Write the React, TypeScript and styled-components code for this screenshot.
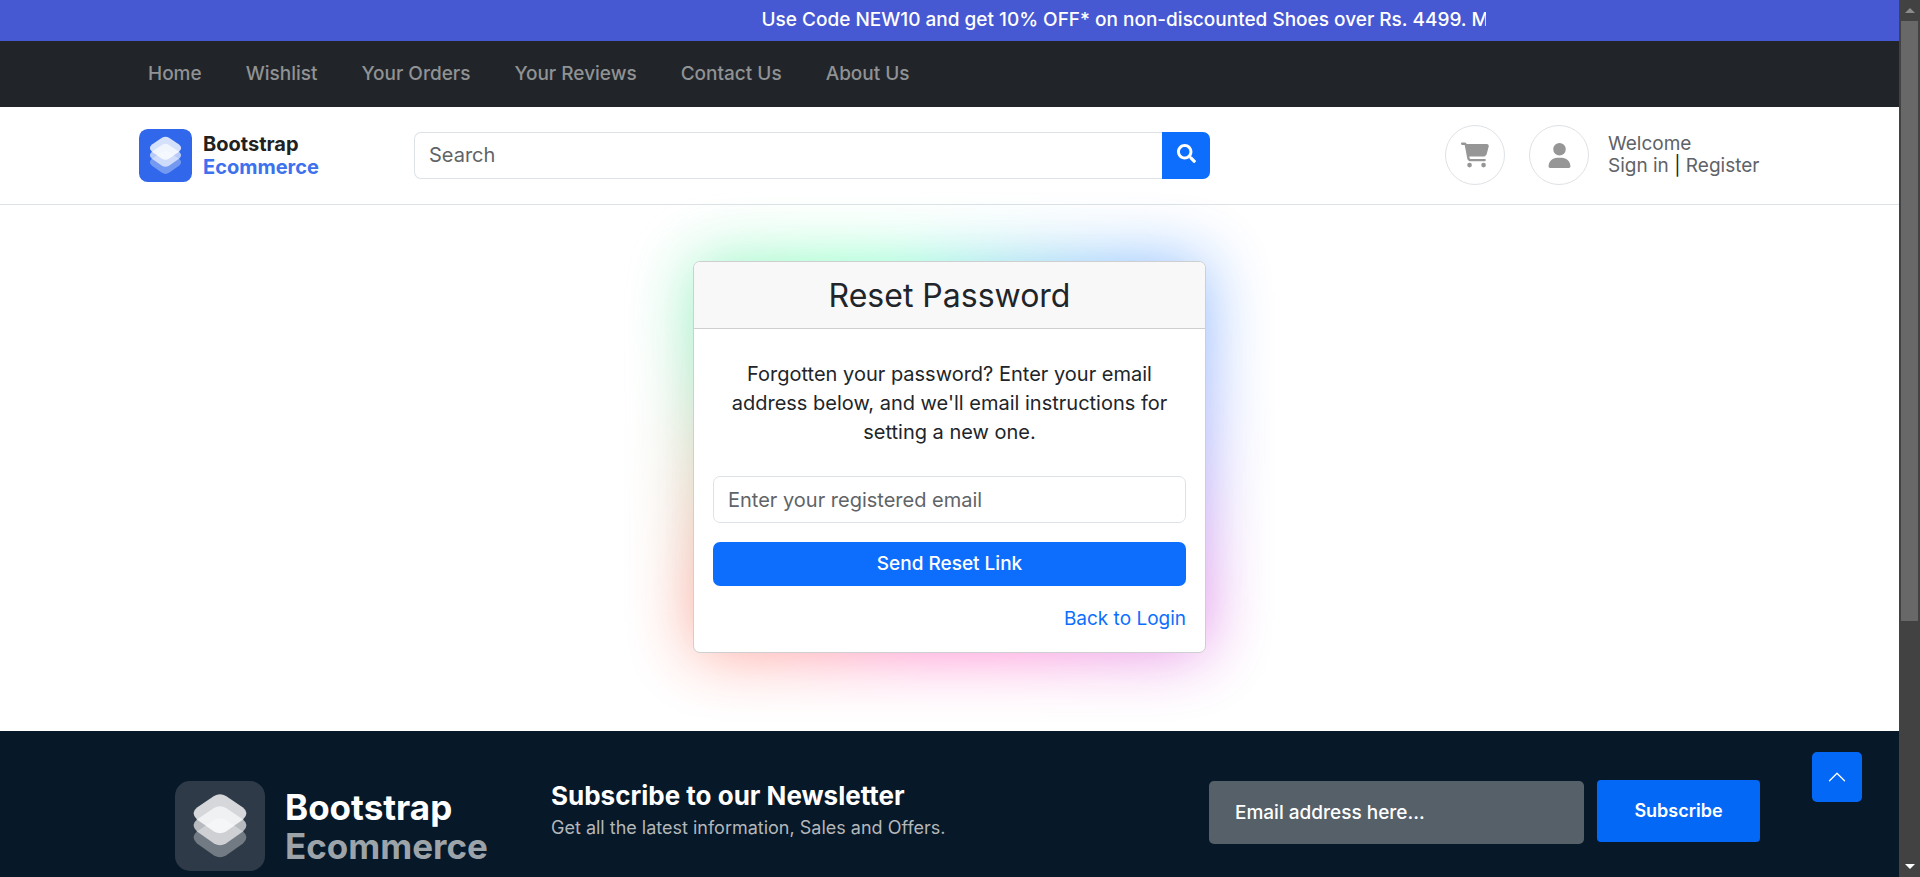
import React from "react";
import styled, { createGlobalStyle } from "styled-components";
import { FaCartShopping, FaUser } from "react-icons/fa6";
import { FaSearch } from "react-icons/fa";
import { BsChevronUp } from "react-icons/bs";

const GlobalStyle = createGlobalStyle`
  *, *::before, *::after { box-sizing: border-box; }
  body {
    margin: 0;
    background: #fff;
    color: #212529;
    font-family: Inter, "Open Sans", sans-serif;
    font-size: 19px;
    line-height: 28px;
  }
  h1, h2, p, ul { margin: 0; padding: 0; }
  button, input { font: inherit; }
  a { text-decoration: none; color: inherit; }
`;

const Shell = styled.div`
  display: grid;
  grid-template-columns: minmax(0, 1fr) 21px;
  height: 100vh;
  overflow: hidden;
`;

const Page = styled.div`
  position: relative;
  display: flex;
  flex-direction: column;
  min-width: 0;
  overflow: hidden;
`;

const Container = styled.div`
  display: flex;
  width: 100%;
  max-width: 1621px;
  margin: 0 auto;
`;

const PromoBar = styled.div`
  display: flex;
  justify-content: center;
  flex: none;
  height: 41px;
  background: #4758d3;
`;

const Marquee = styled.p`
  width: 1072px;
  padding-left: 348px;
  overflow: hidden;
  color: #fff;
  font-weight: 500;
  line-height: 40px;
  white-space: nowrap;
`;

const NavBar = styled.nav`
  flex: none;
  height: 66px;
  background: #212529;
`;

const NavList = styled.ul`
  display: flex;
  gap: 44px;
  padding-left: 9px;
  list-style: none;
`;

const NavLink = styled.a`
  display: block;
  color: #909294;
  font-weight: 500;
  line-height: 66px;
`;

const Header = styled.header`
  display: flex;
  flex: none;
  height: 98px;
  border-bottom: 1px solid #dee2e6;
`;

const HeaderRow = styled(Container)`
  align-items: center;
  padding-bottom: 1px;
`;

const Brand = styled.a<{ $large?: boolean }>`
  display: flex;
  align-items: center;
  flex: none;
  gap: ${(p) => (p.$large ? 20 : 11)}px;
  width: ${(p) => (p.$large ? 412 : 275)}px;
  padding-left: ${(p) => (p.$large ? 36 : 0)}px;
  color: ${(p) => (p.$large ? "#fff" : "#212121")};
  font-family: Inter, sans-serif;
  font-size: ${(p) => (p.$large ? 35 : 20)}px;
  font-weight: 700;
  line-height: ${(p) => (p.$large ? 39 : 23)}px;
`;

const BrandName = styled.span`
  padding-top: 2px;
`;

const BrandSecond = styled.span<{ $large?: boolean }>`
  display: block;
  color: ${(p) => (p.$large ? "#9ca3a9" : "#3d71ee")};
`;

const SearchForm = styled.form`
  display: flex;
  flex: 0 1 796px;
  height: 47px;
`;

const TextInput = styled.input`
  width: 100%;
  min-width: 0;
  height: 47px;
  padding: 0 14px;
  border: 1px solid #dee2e6;
  border-radius: 7px;
  background: #fff;
  font-size: 20px;
  outline: none;
  &::placeholder { color: #5f6468; opacity: 1; }
`;

const SearchInput = styled(TextInput)`
  flex: 1;
  border-right: 0;
  border-radius: 7px 0 0 7px;
`;

const SearchButton = styled.button`
  display: flex;
  align-items: center;
  justify-content: center;
  width: 48px;
  padding: 0 0 4px;
  border: 0;
  border-radius: 0 7px 7px 0;
  background: #0d6efd;
  color: #fff;
`;

const Account = styled.div`
  display: flex;
  align-items: center;
  gap: 24px;
  margin-left: auto;
`;

const RoundLink = styled.a`
  display: flex;
  align-items: center;
  justify-content: center;
  width: 60px;
  height: 60px;
  border: 1px solid #dee2e6;
  border-radius: 50%;
  color: #969696;
`;

const Profile = styled.div`
  display: flex;
  align-items: center;
  gap: 19px;
`;

const Greeting = styled.div`
  width: 152px;
  color: #5f6368;
  line-height: 22px;
  white-space: nowrap;
`;

const Divider = styled.span`
  color: #212529;
`;

const Main = styled.main`
  display: flex;
  justify-content: center;
  flex: none;
  padding: 56px 0 78px;
`;

const CardWrap = styled.div`
  position: relative;
  width: 513px;
  &::before {
    content: "";
    position: absolute;
    inset: 0;
    opacity: 0.47;
    filter: blur(33px);
    background: conic-gradient(
      #00dcb4 0deg,
      #0070ff 48deg,
      #3c50f5 85deg,
      #be14d2 122deg,
      #ff00a0 160deg,
      #ff0096 190deg,
      #ff3c1e 232deg,
      #a0965a 270deg,
      #28d278 295deg,
      #00ff78 325deg,
      #00fa96 345deg,
      #00dcb4 360deg
    );
  }
`;

const Card = styled.section`
  position: relative;
  border: 1px solid #cdcfd0;
  border-radius: 7px;
  background: #fff;
  overflow: hidden;
`;

const CardTitle = styled.h1`
  height: 67px;
  border-bottom: 1px solid #cdcfd0;
  background: #f8f8f8;
  font-size: 32px;
  font-weight: 400;
  line-height: 67px;
  text-align: center;
`;

const ResetForm = styled.form`
  display: flex;
  flex-direction: column;
  padding: 31px 19px 19px;
`;

const Instructions = styled.p`
  padding: 0 12px;
  margin-bottom: 29px;
  font-size: 20px;
  line-height: 29px;
  text-align: center;
`;

const SubmitButton = styled.button`
  height: 44px;
  margin: 19px 0;
  border: 0;
  border-radius: 7px;
  background: #0d6efd;
  color: #fff;
  font-weight: 500;
`;

const BackLink = styled.a`
  align-self: flex-end;
  color: #0d6efd;
`;

const Footer = styled.footer`
  flex: 1 0 auto;
  padding-top: 49px;
  background: #071828;
`;

const FooterRow = styled(Container)`
  align-items: flex-start;
`;

const FooterBrand = styled.div`
  padding-top: 1px;
`;

const NewsletterTitle = styled.h2`
  color: #fff;
  font-size: 26px;
  font-weight: 700;
  line-height: 32px;
`;

const NewsletterText = styled.p`
  color: #b4b7ba;
  font-size: 18px;
  line-height: 32px;
`;

const SubscribeForm = styled.form`
  display: flex;
  gap: 13px;
  margin-left: auto;
`;

const SubscribeInput = styled(TextInput)`
  width: 375px;
  height: 63px;
  margin-top: 1px;
  padding: 0 26px;
  border: 0;
  border-radius: 5px;
  background: #566069;
  font-size: 19px;
  font-weight: 500;
  &::placeholder { color: #fff; }
`;

const SubscribeButton = styled.button`
  width: 163px;
  height: 62px;
  border: 0;
  border-radius: 4px;
  background: #0468f7;
  color: #fff;
  font-size: 18px;
  font-weight: 600;
`;

const ScrollTop = styled.button`
  position: absolute;
  right: 37px;
  bottom: 75px;
  display: flex;
  align-items: center;
  justify-content: center;
  width: 50px;
  height: 50px;
  padding: 0;
  border: 0;
  border-radius: 5px;
  background: #0468f7;
  color: #fff;
`;

const Scrollbar = styled.div`
  display: flex;
  flex-direction: column;
  padding: 0 2px;
  background: #424242;
`;

const ScrollArrow = styled.span<{ $down?: boolean }>`
  display: flex;
  align-items: center;
  justify-content: center;
  flex: none;
  height: 21px;
  &::after {
    content: "";
    border: 5px solid transparent;
    border-top: ${(p) => (p.$down ? "5px solid #fff" : "0")};
    border-bottom: ${(p) => (p.$down ? "0" : "5px solid #8b8b8b")};
  }
`;

const ScrollThumb = styled.span`
  flex: 600;
  background: #686868;
`;

const ScrollRest = styled.span`
  flex: 235;
`;

const LAYER =
  "M39 15 Q45 11.500 51 15 L68 26.500 Q75 32 68 38.500 L51 50.500 Q45 54 39 50.500 L22 38.500 Q15 32 22 26.500 Z";

function LogoMark({ size, box }: { size: number; box: string }) {
  return (
    <svg width={size} height={size} viewBox="0 0 90 90" aria-hidden="true">
      <rect width="90" height="90" rx="15" fill={box} />
      <g fill="#fff">
        <path d={LAYER} opacity="0.33" transform="translate(0 24)" />
        <path d={LAYER} opacity="0.65" transform="translate(0 12)" />
        <path d={LAYER} opacity="0.8" />
      </g>
    </svg>
  );
}

function Logo({ large }: { large?: boolean }) {
  return (
    <Brand href="#" $large={large}>
      <LogoMark size={large ? 90 : 53} box={large ? "#2e3a47" : "#3167eb"} />
      <BrandName>
        Bootstrap
        <BrandSecond $large={large}>Ecommerce</BrandSecond>
      </BrandName>
    </Brand>
  );
}

const links = ["Home", "Wishlist", "Your Orders", "Your Reviews", "Contact Us", "About Us"];

export default function App() {
  return (
    <>
      <GlobalStyle />
      <Shell>
        <Page>
          <PromoBar>
            <Marquee>
              Use Code NEW10 and get 10% OFF* on non-discounted Shoes over Rs. 4499. Mo
            </Marquee>
          </PromoBar>
          <NavBar>
            <Container>
              <NavList>
                {links.map((label) => (
                  <li key={label}>
                    <NavLink href="#">{label}</NavLink>
                  </li>
                ))}
              </NavList>
            </Container>
          </NavBar>
          <Header>
            <HeaderRow>
              <Logo />
              <SearchForm role="search">
                <SearchInput type="text" placeholder="Search" aria-label="Search" />
                <SearchButton type="button" aria-label="Search">
                  <FaSearch size={19} />
                </SearchButton>
              </SearchForm>
              <Account>
                <RoundLink href="#" aria-label="Cart">
                  <FaCartShopping size={28} />
                </RoundLink>
                <Profile>
                  <RoundLink href="#" aria-label="Profile">
                    <FaUser size={25} />
                  </RoundLink>
                  <Greeting>
                    Welcome
                    <br />
                    <a href="#">Sign in</a> <Divider>|</Divider> <a href="#">Register</a>
                  </Greeting>
                </Profile>
              </Account>
            </HeaderRow>
          </Header>
          <Main>
            <CardWrap>
              <Card>
                <CardTitle>Reset Password</CardTitle>
                <ResetForm>
                  <Instructions>
                    Forgotten your password? Enter your email address below, and we'll email
                    instructions for setting a new one.
                  </Instructions>
                  <TextInput
                    type="email"
                    placeholder="Enter your registered email"
                    aria-label="Email"
                  />
                  <SubmitButton type="button">Send Reset Link</SubmitButton>
                  <BackLink href="#">Back to Login</BackLink>
                </ResetForm>
              </Card>
            </CardWrap>
          </Main>
          <Footer>
            <FooterRow>
              <FooterBrand>
                <Logo large />
              </FooterBrand>
              <div>
                <NewsletterTitle>Subscribe to our Newsletter</NewsletterTitle>
                <NewsletterText>
                  Get all the latest information, Sales and Offers.
                </NewsletterText>
              </div>
              <SubscribeForm>
                <SubscribeInput
                  type="email"
                  placeholder="Email address here..."
                  aria-label="Email address"
                />
                <SubscribeButton type="button">Subscribe</SubscribeButton>
              </SubscribeForm>
            </FooterRow>
          </Footer>
          <ScrollTop type="button" aria-label="Back to top">
            <BsChevronUp size={20} />
          </ScrollTop>
        </Page>
        <Scrollbar aria-hidden="true">
          <ScrollArrow />
          <ScrollThumb />
          <ScrollRest />
          <ScrollArrow $down />
        </Scrollbar>
      </Shell>
    </>
  );
}
